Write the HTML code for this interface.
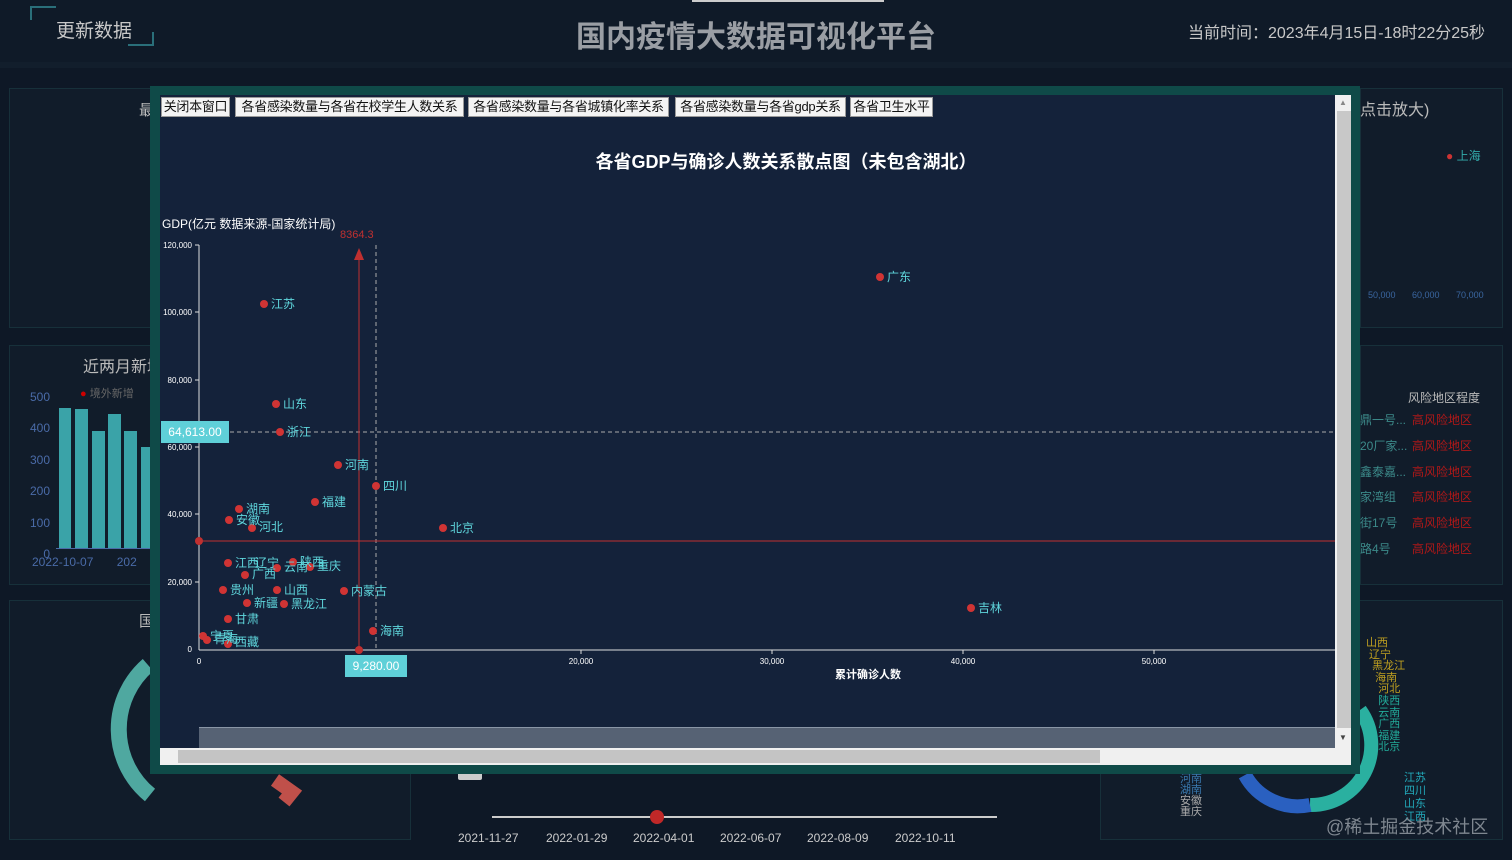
<!DOCTYPE html>
<html><head><meta charset="utf-8"><style>
*{margin:0;padding:0;box-sizing:border-box}
body{width:1512px;height:860px;overflow:hidden;background:#0e1826;font-family:"Liberation Sans","Noto Sans CJK SC",sans-serif;position:relative;color:#ccc}
.a{position:absolute}
.panel{position:absolute;background:#111c2a;border:1px solid #17303a}
.btn{position:absolute;top:97px;height:20px;background:#f4f4f4;color:#111;font-size:13px;line-height:18px;border:1px solid #999;white-space:nowrap;overflow:hidden;text-align:center;letter-spacing:-0.3px}
</style></head><body>
<div class="a" style="left:0;top:0;width:1512px;height:62px;background:#0f1a28"></div>
<div class="a" style="left:0;top:62px;width:1512px;height:6px;background:#121e2c"></div>
<div class="a" style="left:30px;top:6px;width:26px;height:14px;border-left:2px solid #2a6f7a;border-top:2px solid #2a6f7a"></div>
<div class="a" style="left:128px;top:32px;width:26px;height:14px;border-right:2px solid #2a6f7a;border-bottom:2px solid #2a6f7a"></div>
<div class="a" style="left:56px;top:16px;font-size:19px;color:#c8c8c8">更新数据</div>
<div class="a" style="left:576px;top:12px;font-size:30px;font-weight:bold;color:#9a9ea4">国内疫情大数据可视化平台</div>
<div class="a" style="left:692px;top:0;width:192px;height:2px;background:#ccc"></div>
<div class="a" style="left:1188px;top:19px;font-size:16px;color:#c8c8c8">当前时间：2023年4月15日-18时22分25秒</div>

<div class="panel" style="left:9px;top:88px;width:150px;height:240px"></div>
<div class="a" style="left:139px;top:99px;font-size:15px;color:#bbb">最</div>
<div class="panel" style="left:9px;top:345px;width:150px;height:240px"></div>
<div class="a" style="left:83px;top:353px;font-size:16px;color:#bbb">近两月新增</div>
<div class="a" style="left:20px;top:382px;font-size:12px;color:#4a6ba8;line-height:31.4px;text-align:right;width:30px">500<br>400<br>300<br>200<br>100<br>0</div>
<div class="a" style="left:80px;top:385px;font-size:11px;color:#666"><span style="color:#c00">●</span> 境外新增</div>
<div class="a" style="left:59px;top:408px;width:12px;height:140px;background:#3aa3a8"></div>
<div class="a" style="left:75px;top:409px;width:13px;height:139px;background:#3aa3a8"></div>
<div class="a" style="left:92px;top:431px;width:13px;height:117px;background:#3aa3a8"></div>
<div class="a" style="left:108px;top:414px;width:13px;height:134px;background:#3aa3a8"></div>
<div class="a" style="left:124px;top:431px;width:13px;height:117px;background:#3aa3a8"></div>
<div class="a" style="left:141px;top:447px;width:13px;height:101px;background:#3aa3a8"></div>
<div class="a" style="left:56px;top:548px;width:100px;height:1px;background:#4a6ba8"></div>
<div class="a" style="left:32px;top:555px;font-size:12px;color:#4a6ba8">2022-10-07 &nbsp; &nbsp; &nbsp; 202</div>
<div class="panel" style="left:9px;top:600px;width:402px;height:240px"></div>
<div class="a" style="left:139px;top:610px;font-size:15px;color:#bbb">国</div>
<svg class="a" style="left:100px;top:640px" width="220" height="170"><path d="M48 25 A85 85 0 0 0 50 155" stroke="#4fa8a0" stroke-width="16" fill="none"/><path d="M175 140 L192 152 L184 162" stroke="#c0504a" stroke-width="14" fill="none"/></svg>
<div class="panel" style="left:1360px;top:88px;width:143px;height:240px"></div>
<div class="a" style="left:1360px;top:96px;font-size:16px;color:#bbb">点击放大)</div>
<div class="a" style="left:1446px;top:147px;font-size:12px;color:#3aa;"><span style="color:#c33">●</span> 上海</div>
<div class="a" style="left:1368px;top:290px;font-size:9px;color:#3a66a0;word-spacing:14px">50,000 60,000 70,000</div>
<div class="panel" style="left:1360px;top:345px;width:143px;height:240px"></div>
<div class="a" style="left:1408px;top:389px;font-size:12px;color:#bbb">风险地区程度</div>
<div class="a" style="left:1360px;top:408px;font-size:12px;line-height:25.8px;color:#3c8a8a">鼎一号...<br>20厂家...<br>鑫泰嘉...<br>家湾组<br>街17号<br>路4号</div>
<div class="a" style="left:1412px;top:408px;font-size:12px;line-height:25.8px;color:#b01818">高风险地区<br>高风险地区<br>高风险地区<br>高风险地区<br>高风险地区<br>高风险地区</div>
<div class="panel" style="left:1100px;top:600px;width:403px;height:240px"></div>
<svg class="a" style="left:1170px;top:640px" width="280" height="200"><path d="M190 70 A60 60 0 0 1 140 165" stroke="#2ab0a0" stroke-width="14" fill="none"/><path d="M140 165 A60 60 0 0 1 75 135" stroke="#2a60c0" stroke-width="14" fill="none"/></svg>
<div class="a" style="left:1180px;top:774px;font-size:11px;color:#3a7ab0;line-height:11px">河南<br>湖南<br><span style="color:#aaa">安徽<br>重庆</span></div>
<div class="a" style="left:1366px;top:638px;font-size:11px;line-height:11.6px;color:#c0a020">山西<br>&nbsp;辽宁<br>&nbsp; 黑龙江<br>&nbsp; &nbsp;海南<br>&nbsp; &nbsp; 河北<br><span style="color:#2a9">&nbsp; &nbsp; 陕西<br>&nbsp; &nbsp; 云南<br>&nbsp; &nbsp; 广西<br>&nbsp; &nbsp; 福建<br>&nbsp; &nbsp; 北京</span></div>
<div class="a" style="left:1404px;top:772px;font-size:11px;line-height:13px;color:#2ab">江苏<br>四川<br>山东<br>江西</div>
<div class="a" style="left:1326px;top:813px;font-size:18px;color:#7f8790">@稀土掘金技术社区</div>
<div class="a" style="left:492px;top:816px;width:505px;height:2px;background:#ccc"></div>
<div class="a" style="left:650px;top:810px;width:14px;height:14px;border-radius:50%;background:#c02828"></div>
<div class="a" style="left:458px;top:831px;font-size:12px;color:#ccc">2021-11-27</div>
<div class="a" style="left:546px;top:831px;font-size:12px;color:#ccc">2022-01-29</div>
<div class="a" style="left:633px;top:831px;font-size:12px;color:#ccc">2022-04-01</div>
<div class="a" style="left:720px;top:831px;font-size:12px;color:#ccc">2022-06-07</div>
<div class="a" style="left:807px;top:831px;font-size:12px;color:#ccc">2022-08-09</div>
<div class="a" style="left:895px;top:831px;font-size:12px;color:#ccc">2022-10-11</div>
<div class="a" style="left:458px;top:772px;width:24px;height:8px;background:#ccc;border-radius:2px"></div>

<!-- modal -->
<div class="a" style="left:150px;top:86px;width:1210px;height:688px;background:#0f4a48"></div>
<div class="a" style="left:160px;top:95px;width:1190px;height:670px;background:#14223a"></div>
<div class="btn" style="left:161px;width:69px">关闭本窗口</div>
<div class="btn" style="left:235px;width:229px">各省感染数量与各省在校学生人数关系</div>
<div class="btn" style="left:468px;width:201px">各省感染数量与各省城镇化率关系</div>
<div class="btn" style="left:675px;width:171px">各省感染数量与各省gdp关系</div>
<div class="btn" style="left:850px;width:83px">各省卫生水平</div>
<div class="a" style="left:1335px;top:95px;width:16px;height:653px;background:#c8c8c8;border-left:2px solid #f0f0f0"></div>
<div class="a" style="left:1335px;top:95px;width:16px;height:16px;background:#f0f0f0;font-size:8px;color:#888;text-align:center;line-height:16px">▲</div>
<div class="a" style="left:1335px;top:728px;width:16px;height:20px;background:#f0f0f0;font-size:8px;color:#444;text-align:center;line-height:20px">▼</div>
<div class="a" style="left:160px;top:748px;width:1191px;height:17px;background:#f0f0f0"></div>
<div class="a" style="left:178px;top:750px;width:922px;height:13px;background:#c4c4c4"></div>
<div class="a" style="left:199px;top:727px;width:1136px;height:21px;background:#566274;border-top:1px solid #8a96a6"></div>
<svg class="a" style="left:0;top:0" width="1512" height="860" font-family="Liberation Sans,Noto Sans CJK SC,sans-serif">
<text x="786" y="168" font-size="18" font-weight="bold" fill="#fff" text-anchor="middle">各省GDP与确诊人数关系散点图（未包含湖北）</text>
<text x="162" y="228" font-size="12" fill="#fff">GDP(亿元 数据来源-国家统计局)</text>
<text x="340" y="238" font-size="11" fill="#c03030">8364.3</text>
<g stroke="#ddd" stroke-width="1"><line x1="199" y1="245" x2="199" y2="650"/><line x1="199" y1="650" x2="1335" y2="650"/>
<line x1="195" y1="245" x2="199" y2="245"/><line x1="195" y1="312" x2="199" y2="312"/><line x1="195" y1="380" x2="199" y2="380"/><line x1="195" y1="447" x2="199" y2="447"/><line x1="195" y1="514" x2="199" y2="514"/><line x1="195" y1="582" x2="199" y2="582"/>
<line x1="581" y1="650" x2="581" y2="654"/><line x1="772" y1="650" x2="772" y2="654"/><line x1="963" y1="650" x2="963" y2="654"/><line x1="1154" y1="650" x2="1154" y2="654"/></g>
<g font-size="8" fill="#fff" text-anchor="end"><text x="192" y="248">120,000</text><text x="192" y="315">100,000</text><text x="192" y="383">80,000</text><text x="192" y="450">60,000</text><text x="192" y="517">40,000</text><text x="192" y="585">20,000</text><text x="192" y="652">0</text></g>
<g font-size="8" fill="#fff" text-anchor="middle"><text x="199" y="664">0</text><text x="581" y="664">20,000</text><text x="772" y="664">30,000</text><text x="963" y="664">40,000</text><text x="1154" y="664">50,000</text></g>
<text x="868" y="678" font-size="11" font-weight="bold" fill="#fff" text-anchor="middle">累计确诊人数</text>
<line x1="230" y1="432" x2="1335" y2="432" stroke="#aaa" stroke-dasharray="4,3"/>
<line x1="376" y1="245" x2="376" y2="650" stroke="#aaa" stroke-dasharray="4,3"/>
<line x1="199" y1="541" x2="1335" y2="541" stroke="#c03030"/>
<line x1="359" y1="250" x2="359" y2="650" stroke="#c03030"/><path d="M354 260 L359 248 L364 260 Z" fill="#c03030"/>
<circle cx="199" cy="541" r="4" fill="#c03030"/><circle cx="359" cy="650" r="4" fill="#c03030"/>
<rect x="161" y="421" width="68" height="22" fill="#5fd0d8"/><text x="195" y="436" font-size="12" fill="#fff" text-anchor="middle">64,613.00</text>
<rect x="345" y="655" width="62" height="22" fill="#5fd0d8"/><text x="376" y="670" font-size="12" fill="#fff" text-anchor="middle">9,280.00</text>
<g fill="#d03434">
<circle cx="880" cy="277" r="4"/><circle cx="264" cy="304" r="4"/><circle cx="276" cy="404" r="4"/><circle cx="280" cy="432" r="4"/><circle cx="338" cy="465" r="4"/><circle cx="376" cy="486" r="4"/><circle cx="315" cy="502" r="4"/><circle cx="443" cy="528" r="4"/><circle cx="239" cy="509" r="4"/><circle cx="229" cy="520" r="4"/><circle cx="252" cy="528" r="4"/><circle cx="228" cy="563" r="4"/><circle cx="245" cy="575" r="4"/><circle cx="277" cy="568" r="4"/><circle cx="293" cy="562" r="4"/><circle cx="310" cy="567" r="4"/><circle cx="223" cy="590" r="4"/><circle cx="277" cy="590" r="4"/><circle cx="344" cy="591" r="4"/><circle cx="247" cy="603" r="4"/><circle cx="284" cy="604" r="4"/><circle cx="228" cy="619" r="4"/><circle cx="373" cy="631" r="4"/><circle cx="203" cy="636" r="4"/><circle cx="207" cy="640" r="4"/><circle cx="228" cy="644" r="4"/><circle cx="971" cy="608" r="4"/></g>
<g font-size="12" fill="#5fd6dc">
<text x="887" y="281">广东</text><text x="271" y="308">江苏</text><text x="283" y="408">山东</text><text x="287" y="436">浙江</text><text x="345" y="469">河南</text><text x="383" y="490">四川</text><text x="322" y="506">福建</text><text x="450" y="532">北京</text><text x="246" y="513">湖南</text><text x="236" y="524">安徽</text><text x="259" y="531">河北</text><text x="235" y="567">江西</text><text x="252" y="578">广西</text><text x="255" y="567">辽宁</text><text x="284" y="571">云南</text><text x="300" y="566">陕西</text><text x="317" y="570">重庆</text><text x="230" y="594">贵州</text><text x="284" y="594">山西</text><text x="351" y="595">内蒙古</text><text x="254" y="607">新疆</text><text x="291" y="608">黑龙江</text><text x="235" y="623">甘肃</text><text x="380" y="635">海南</text><text x="210" y="640">宁夏</text><text x="214" y="643">青海</text><text x="235" y="646">西藏</text><text x="978" y="612">吉林</text></g>
</svg>
</body></html>
